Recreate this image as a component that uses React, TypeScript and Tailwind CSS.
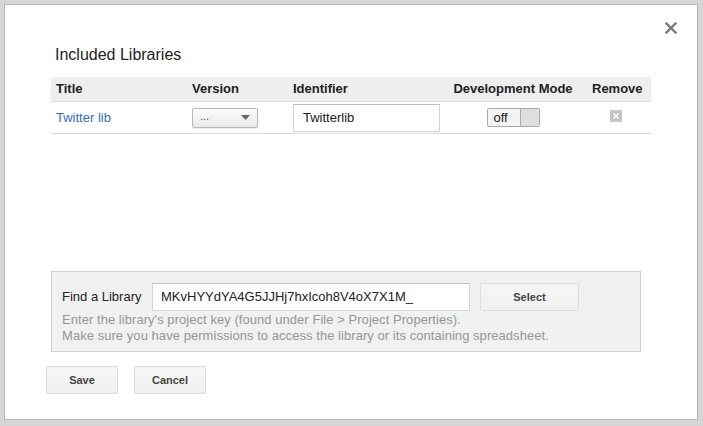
import React from 'react';

const font = { fontFamily: '"Liberation Sans", Arial, sans-serif' };

const App = () => {
    return (
        <div className="w-[703px] h-[426px] bg-[#d6d6d6] pt-[4px] pl-[4px] pr-[5px] pb-[6px]" style={font}>
            <div className="relative w-full h-full bg-white border border-[#b5b5b5] pt-[39px] pl-[46px]">
                {/* close */}
                <button className="absolute top-[16px] right-[19px] w-[14px] h-[14px] flex items-center justify-center">
                    <svg width="12" height="12" viewBox="0 0 12 12">
                        <path d="M1.5 1.5 L10.5 10.5 M10.5 1.5 L1.5 10.5" stroke="#7a7a7a" strokeWidth="2.4" strokeLinecap="square" />
                    </svg>
                </button>

                <h2 className="ml-[4px] text-[16px] leading-[22px] text-[#222]">Included Libraries</h2>

                {/* table */}
                <div className="mt-[11px] h-[194px] w-[600px]">
                    <div className="grid grid-cols-[136px_101px_160px_130px_73px] h-[25px] bg-[#eeeeee] border-b border-[#dcdcdc] text-[13px] font-bold text-[#222] items-center">
                        <div className="pl-[5px]">Title</div>
                        <div className="pl-[5px]">Version</div>
                        <div className="pl-[5px]">Identifier</div>
                        <div className="text-center">Development Mode</div>
                        <div className="pl-[14px]">Remove</div>
                    </div>
                    <div className="grid grid-cols-[136px_101px_160px_130px_73px] h-[32px] border-b border-[#dcdcdc] items-center text-[13px]">
                        <div className="pl-[5px] text-[#3b6cc4]">Twitter lib</div>
                        <div className="pl-[5px]">
                            <div className="w-[66px] h-[20px] rounded-[2px] border border-[#b9b9b9] bg-gradient-to-b from-[#fbfbfb] to-[#e9e9e9] flex items-center justify-between pl-[7px] pr-[7px] shadow-[0_1px_1px_rgba(0,0,0,0.08)]">
                                <span className="text-[11px] leading-none text-[#555] -mt-[2px]">...</span>
                                <svg width="9" height="5" viewBox="0 0 9 5">
                                    <path d="M0 0 H9 L4.5 5 Z" fill="#666" />
                                </svg>
                            </div>
                        </div>
                        <div className="pl-[5px]">
                            <div className="w-[147px] h-[28px] border border-[#d3d3d3] border-t-[#c0c0c0] bg-white flex items-center pl-[9px] text-[13px] text-[#222]">
                                Twitterlib
                            </div>
                        </div>
                        <div className="flex justify-center">
                            <div className="w-[53px] h-[19px] rounded-[2px] border border-[#a9a9a9] bg-[#f4f4f4] flex items-center">
                                <span className="pl-[6px] w-[32px] text-[13px] leading-none text-[#222]">off</span>
                                <span className="ml-auto h-[17px] w-[19px] bg-[#dedede] border-l border-[#aaaaaa] rounded-r-[2px]"></span>
                            </div>
                        </div>
                        <div className="flex pl-[32px] -mt-[3px]">
                            <div className="w-[12px] h-[12px] bg-[#c4c4c4] rounded-[1px] flex items-center justify-center">
                                <svg width="8" height="8" viewBox="0 0 8 8">
                                    <path d="M1.5 1.5 L6.5 6.5 M6.5 1.5 L1.5 6.5" stroke="#fff" strokeWidth="1.6" />
                                </svg>
                            </div>
                        </div>
                    </div>
                </div>

                {/* find a library */}
                <div className="w-[590px] h-[81px] bg-[#f1f1f1] border border-[#d0d0d0] pl-[10px] pt-[11px]">
                    <div className="flex items-center">
                        <span className="text-[13px] text-[#222] w-[90px]">Find a Library</span>
                        <div className="w-[318px] h-[28px] bg-white border border-[#d6d6d6] border-t-[#c2c2c2] flex items-center pl-[8px] text-[13px] text-[#222]">
                            MKvHYYdYA4G5JJHj7hxIcoh8V4oX7X1M_
                        </div>
                        <button className="ml-[10px] w-[99px] h-[28px] rounded-[2px] border border-[#dcdcdc] bg-gradient-to-b from-[#f6f6f6] to-[#f0f0f0] text-[11px] font-bold text-[#444]">
                            Select
                        </button>
                    </div>
                    <div className="mt-[1px] text-[13px] leading-[16px] text-[#969696] tracking-[0.05px]">
                        <div>Enter the library's project key (found under File &gt; Project Properties).</div>
                        <div>Make sure you have permissions to access the library or its containing spreadsheet.</div>
                    </div>
                </div>

                {/* actions */}
                <div className="mt-[14px] -ml-[5px] flex gap-[16px]">
                    <button className="w-[72px] h-[28px] rounded-[2px] border border-[#dcdcdc] bg-gradient-to-b from-[#f6f6f6] to-[#f0f0f0] text-[11px] font-bold text-[#444]">
                        Save
                    </button>
                    <button className="w-[72px] h-[28px] rounded-[2px] border border-[#dcdcdc] bg-gradient-to-b from-[#f6f6f6] to-[#f0f0f0] text-[11px] font-bold text-[#444]">
                        Cancel
                    </button>
                </div>
            </div>
        </div>
    );
};

export default App;
